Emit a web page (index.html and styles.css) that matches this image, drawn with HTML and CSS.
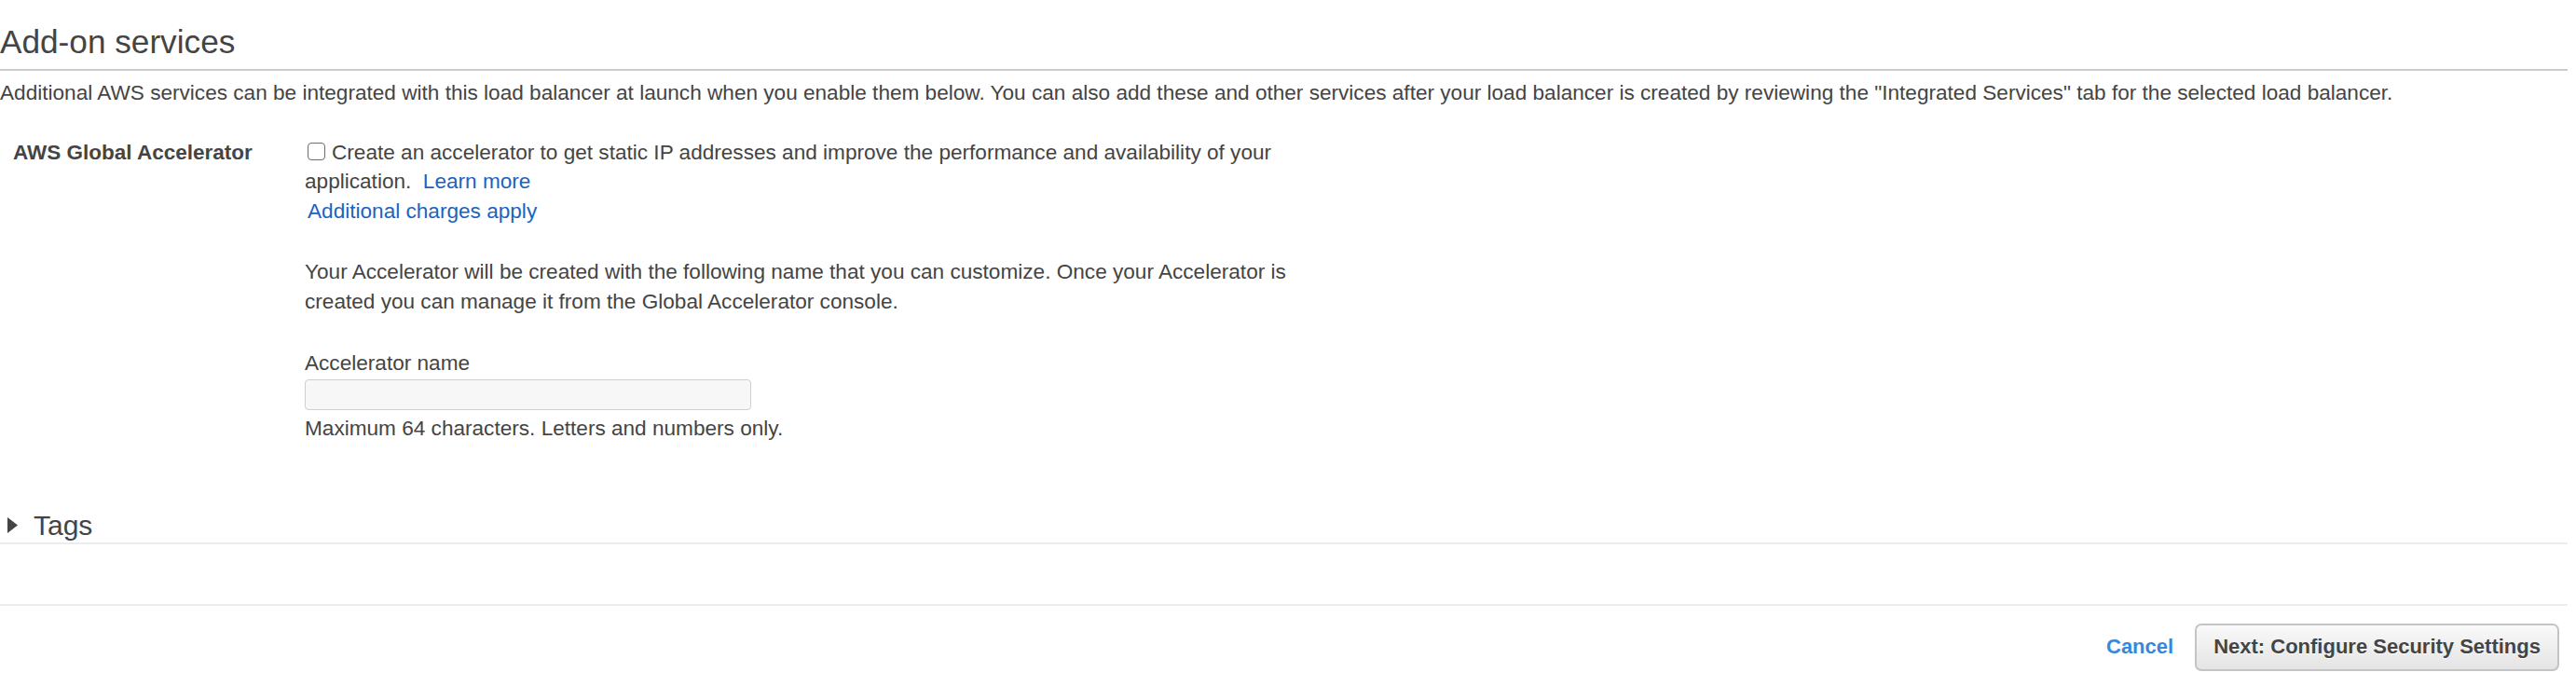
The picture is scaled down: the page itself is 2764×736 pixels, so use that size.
FILE: index.html
```html
<!DOCTYPE html>
<html lang="en">
<head>
<meta charset="utf-8">
<title>Add-on services</title>
<link rel="stylesheet" href="styles.css">
</head>
<body>
<div class="page">
  <h2 class="section-title">Add-on services</h2>
  <p class="section-desc">Additional AWS services can be integrated with this load balancer at launch when you enable them below. You can also add these and other services after your load balancer is created by reviewing the "Integrated Services" tab for the selected load balancer.</p>

  <div class="field-row">
    <div class="field-label">AWS Global Accelerator</div>
    <div class="field-body">
      <div class="check-line"><input type="checkbox" class="check"><span>Create an accelerator to get static IP addresses and improve the performance and availability of your application.&nbsp; <a class="link" href="#">Learn more</a></span></div>
      <div class="charges"><a class="link" href="#">Additional charges apply</a></div>
      <p class="note">Your Accelerator will be created with the following name that you can customize. Once your Accelerator is created you can manage it from the Global Accelerator console.</p>
      <label class="input-label">Accelerator name</label>
      <input type="text" class="text-input">
      <div class="hint">Maximum 64 characters. Letters and numbers only.</div>
    </div>
  </div>

  <div class="tags-header">
    <svg class="caret" width="11" height="17" viewBox="0 0 11 17"><polygon points="0,0 11,8.5 0,17" fill="#444"/></svg>
    <span>Tags</span>
  </div>

  <div class="footer">
    <a class="cancel" href="#">Cancel</a>
    <button class="next-btn" type="button">Next: Configure Security Settings</button>
  </div>
</div>
</body>
</html>
```

FILE: styles.css
```css
html, body {
  margin: 0;
  padding: 0;
  background: #fff;
}

body {
  font-family: "Liberation Sans", Arial, Helvetica, sans-serif;
  color: #444;
  font-size: 22.6px;
  line-height: 31.5px;
}

.page {
  width: 2755px;
  padding-top: 25px;
}

.section-title {
  margin: 0;
  font-size: 35.2px;
  font-weight: normal;
  line-height: 40px;
  padding-bottom: 9px;
  border-bottom: 2px solid #cccccc;
  color: #444;
}

.section-desc {
  margin: 8px 0 0;
}

.field-row {
  display: grid;
  grid-template-columns: 327px 1075px;
  margin-top: 32px;
}

.field-label {
  padding-left: 14px;
  font-weight: bold;
  font-size: 22.5px;
}

.field-body {
  display: flex;
  flex-direction: column;
  align-items: flex-start;
}

.check {
  appearance: none;
  -webkit-appearance: none;
  width: 19px;
  height: 19px;
  margin: 0 7px 0 3px;
  border: 1.5px solid #6b6b6b;
  border-radius: 4px;
  background: #fff;
  vertical-align: -1px;
  box-sizing: border-box;
}

.link {
  color: #1a64c0;
  text-decoration: none;
}

.charges {
  padding-left: 3px;
}

.note {
  margin: 34px 0 0;
}

.input-label {
  display: block;
  margin-top: 35px;
}

.text-input {
  display: block;
  box-sizing: border-box;
  width: 479px;
  height: 33px;
  margin: 1px 0 4px;
  border: 1.5px solid #cfcfcf;
  border-radius: 4px;
  background: #f7f7f7;
  font: inherit;
}

.tags-header {
  display: flex;
  align-items: center;
  margin-top: 70.5px;
  height: 36px;
  line-height: 36px;
  font-size: 30px;
  border-bottom: 2px solid #ececec;
}

.caret {
  margin-left: 8px;
  margin-right: 17px;
  flex: none;
}

.footer {
  display: flex;
  justify-content: flex-end;
  align-items: center;
  gap: 23px;
  margin-top: 64px;
  border-top: 2px solid #ececec;
  padding: 19px 9px 18px 0;
}

.cancel {
  color: #3a86db;
  font-weight: bold;
  font-size: 22px;
  text-decoration: none;
}

.next-btn {
  box-sizing: border-box;
  height: 51px;
  padding: 0 18px;
  border: 2px solid #c4c4c4;
  border-radius: 7px;
  background: linear-gradient(#f9f9f9, #e4e4e4);
  color: #444;
  font-family: inherit;
  font-size: 22px;
  font-weight: bold;
  text-shadow: 0 1px 1px #fff;
}
```
